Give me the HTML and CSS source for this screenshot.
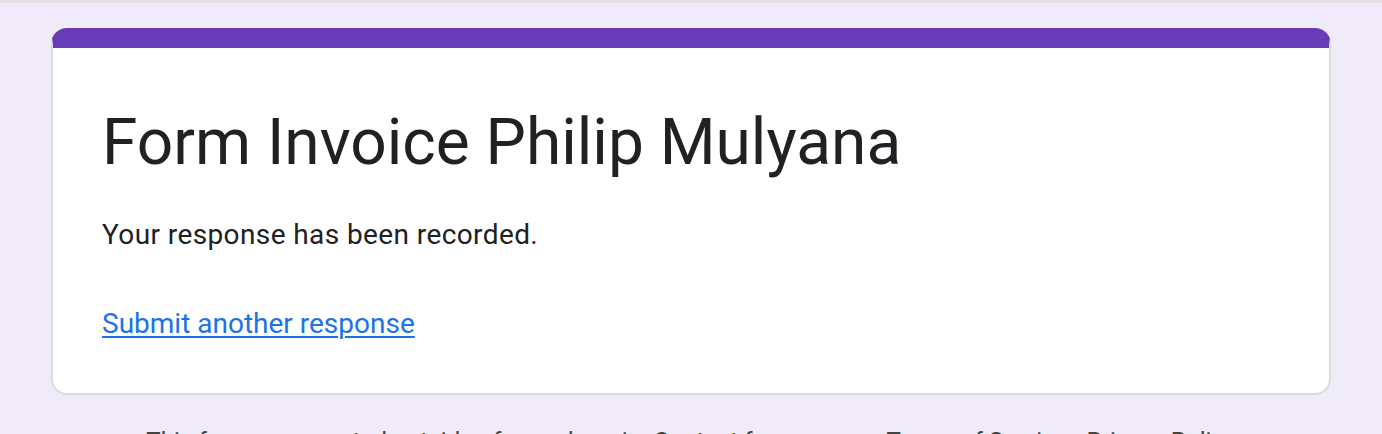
FILE: index.html
```html
<!DOCTYPE html>
<html lang="en">
  <head>
    <meta charset="UTF-8" />
    <meta name="viewport" content="width=device-width, initial-scale=1.0" />
    <title>Form Invoice Philip Mulyana</title>
    <link rel="stylesheet" href="styles.css">
  </head>
  <body>
    <div class="page">
      <div class="card">
        <h1 class="form-title">Form Invoice Philip Mulyana</h1>
        <p class="confirm">Your response has been recorded.</p>
        <a class="again" href="#">Submit another response</a>
      </div>
      <p class="footer">
        This form was created outside of your domain. Contact form owner - Terms of Service - Privacy Policy
      </p>
    </div>
  </body>
</html>
```

FILE: styles.css
```css
body {
  font-family: Roboto, "Liberation Sans", Arial, sans-serif;
  background-color: #f0ebf8;
  margin: 0;
  padding: 0;
  border-top: 3px solid #e3e1e6;
}
.page {
  padding-top: 25px;
}
.card {
  width: 1280px;
  box-sizing: border-box;
  margin: 0 auto;
  background-color: #fff;
  border: 2px solid #dadce0;
  border-top: 20px solid #673ab7;
  border-radius: 16px;
  padding: 55px 48px 49px 49px;
}
.form-title {
  margin: 0;
  font-size: 64px;
  font-weight: 400;
  line-height: 80px;
  color: #202124;
}
.confirm {
  margin: 32px 0 0;
  font-size: 28px;
  line-height: 40px;
  letter-spacing: 0.4px;
  color: #202124;
}
.again {
  display: inline-block;
  margin-top: 49px;
  font-size: 28px;
  line-height: 40px;
  color: #1a73e8;
  text-decoration: underline;
  text-underline-offset: 3px;
  text-decoration-thickness: 2px;
}
.footer {
  margin: 30px 0 0;
  text-align: center;
  font-size: 24px;
  line-height: 32px;
  letter-spacing: 0.1px;
  color: #444;
}
```
